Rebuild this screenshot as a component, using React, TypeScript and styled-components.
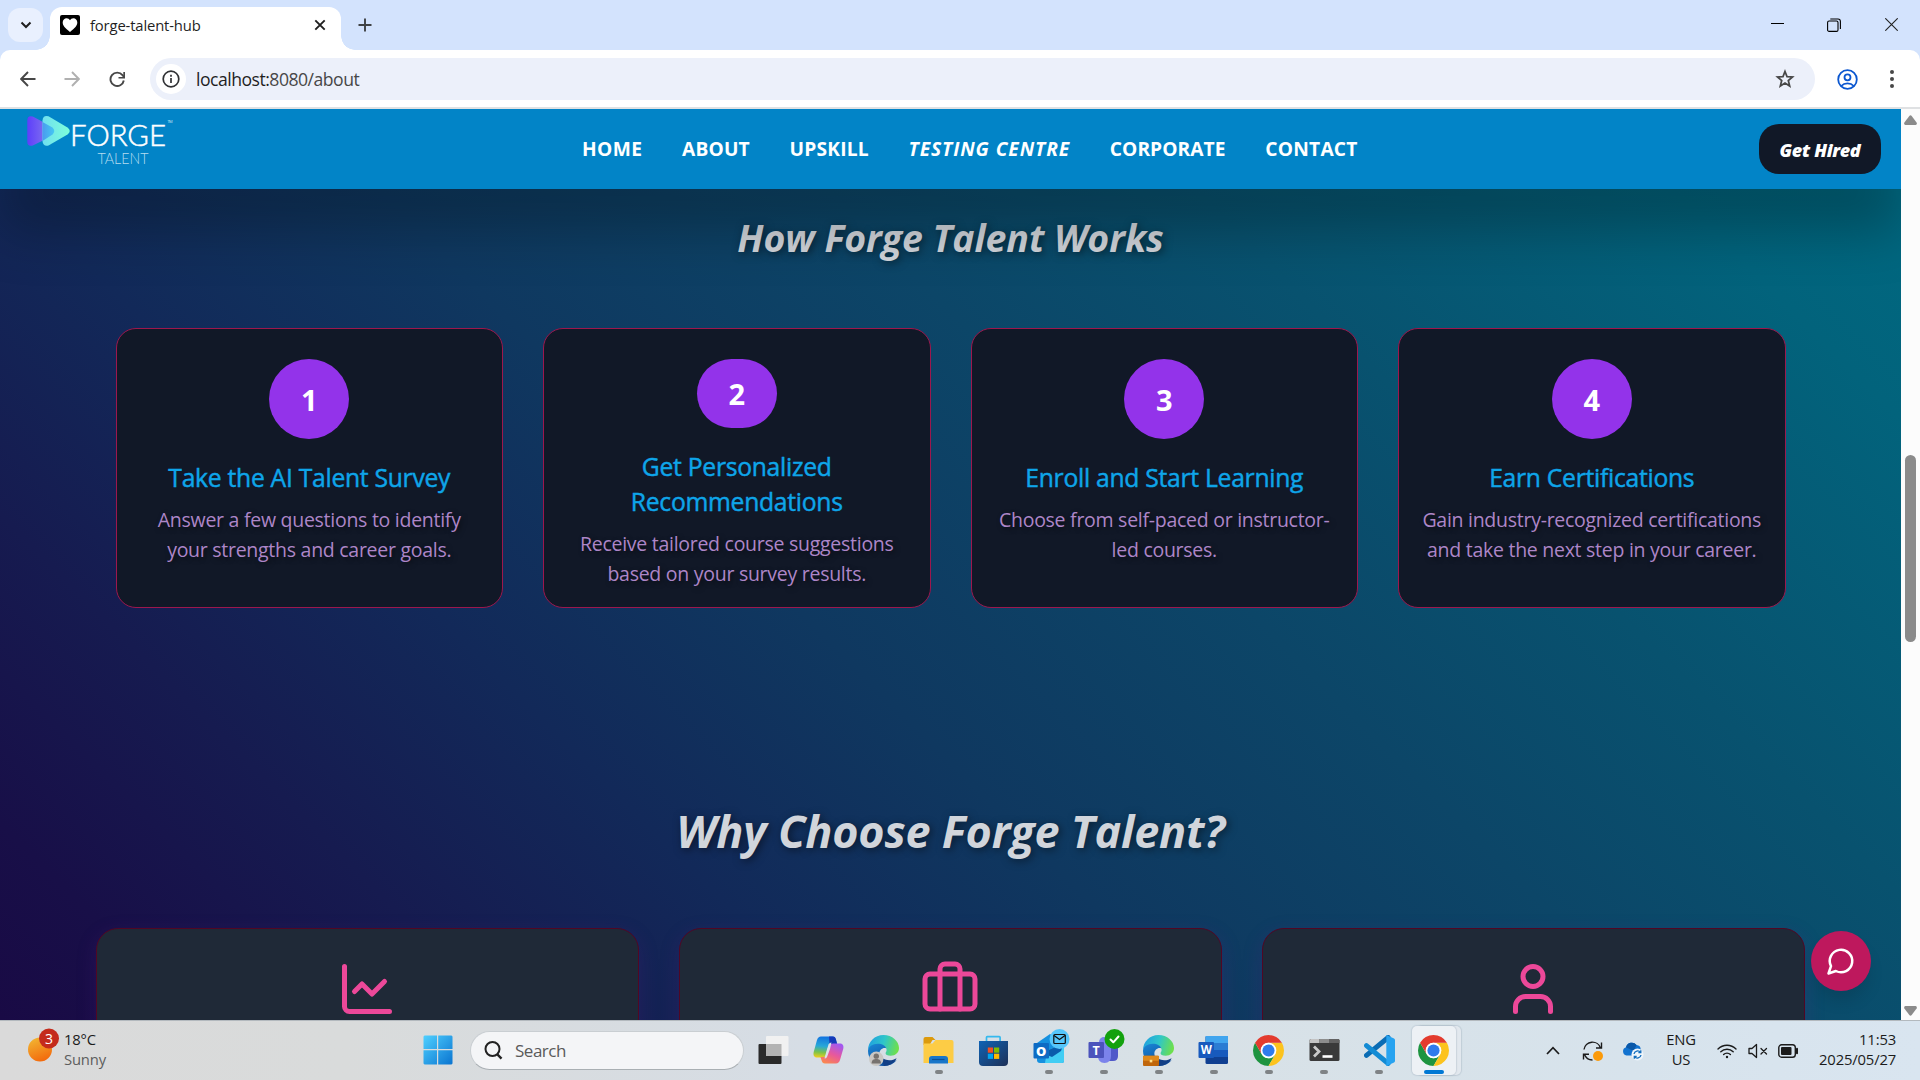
import React from "react";
import styled, { createGlobalStyle, css } from "styled-components";

const GlobalStyle = createGlobalStyle`
  * { box-sizing: border-box; }
  body { margin: 0; overflow: hidden; font-family: "Open Sans", "Noto Sans", sans-serif; }
  h2, h3, p { margin: 0; }
  svg { display: block; flex: none; }
`;

const Screen = styled.div`
  width: 1920px;
  height: 1080px;
  display: flex;
  flex-direction: column;
  background: #d3e3fd;
`;

/* ---------- Browser chrome ---------- */

const TabStrip = styled.div`
  height: 50px;
  flex: none;
  display: flex;
  align-items: flex-start;
  padding-left: 8px;
`;

const TabSearch = styled.div`
  width: 35px;
  height: 34px;
  margin-top: 8px;
  border-radius: 12px;
  background: #e9f0fe;
  display: grid;
  place-items: center;
`;

const Tab = styled.div`
  position: relative;
  width: 291px;
  height: 43px;
  margin: 7px 0 0 7px;
  padding: 0 13px 7px 10px;
  border-radius: 12px 12px 0 0;
  background: #fff;
  display: flex;
  align-items: center;
  &::before, &::after {
    content: "";
    position: absolute;
    bottom: 0;
    width: 14px;
    height: 14px;
  }
  &::before { left: -14px; background: radial-gradient(circle at 0 0, transparent 13.5px, #fff 14px); }
  &::after { right: -14px; background: radial-gradient(circle at 100% 0, transparent 13.5px, #fff 14px); }
`;

const TabTitle = styled.span`
  flex: 1;
  margin-left: 10px;
  font-size: 14.8px;
  line-height: 20px;
  letter-spacing: -0.14px;
  color: #1f1f1f;
`;

const NewTab = styled.div`
  width: 34px;
  height: 50px;
  margin-left: 7px;
  display: grid;
  place-items: center;
`;

const WindowButtons = styled.div`
  margin-left: auto;
  height: 49px;
  display: flex;
  & > div { width: 57px; display: grid; place-items: center; }
  & > div:nth-child(2) { padding-right: 2px; }
`;

const Toolbar = styled.div`
  height: 59px;
  flex: none;
  display: flex;
  align-items: flex-start;
  padding-top: 8px;
  border-radius: 10px 10px 0 0;
  border-bottom: 2px solid #dfe1e3;
  background: #fff;
`;

const ToolButton = styled.div<{ $w: number }>`
  width: ${(p) => p.$w}px;
  height: 42px;
  display: grid;
  place-items: center;
`;

const AddressBar = styled.div`
  width: 1665px;
  height: 42px;
  margin-left: 4px;
  padding: 0 19px 0 6px;
  border-radius: 21px;
  background: #ecf0fa;
  display: flex;
  align-items: center;
`;

const SiteInfo = styled.div`
  width: 30px;
  height: 30px;
  border-radius: 50%;
  background: #fff;
  display: grid;
  place-items: center;
`;

const Address = styled.span`
  flex: 1;
  margin-left: 10px;
  font-size: 17.6px;
  letter-spacing: -0.5px;
  color: #474747;
  b { font-weight: 400; color: #1f1f1f; }
`;

/* ---------- Page ---------- */

const Viewport = styled.div`
  height: 911px;
  flex: none;
  display: flex;
`;

const Page = styled.div`
  position: relative;
  width: 1901px;
  height: 911px;
  overflow: hidden;
  display: flex;
  flex-direction: column;
  background: linear-gradient(45deg, #190a45 0%, #180f48 7%, #161b50 18%, #122959 30%,
    #0f3860 43%, #0c4668 59%, #08526f 72%, #02637c 89%, #006a82 100%);
`;

const Nav = styled.nav`
  position: relative;
  z-index: 1;
  height: 80px;
  flex: none;
  display: flex;
  align-items: center;
  padding: 0 20px 0 24px;
  background: #0284c7;
  box-shadow: 0 43px 52px 0 rgba(0, 0, 0, 0.25);
`;

const NavLinks = styled.div`
  margin: 0 0 2px 402px;
  display: flex;
  gap: 39.7px;
`;

const NavLink = styled.span<{ $ls: number; $italic?: boolean }>`
  font-size: 19.2px;
  font-weight: 700;
  font-style: ${(p) => (p.$italic ? "italic" : "normal")};
  letter-spacing: ${(p) => p.$ls}px;
  white-space: nowrap;
  color: #fff;
`;

const HireButton = styled.div`
  width: 122px;
  height: 50px;
  margin-left: auto;
  border-radius: 20px;
  background: #111827;
  color: #fff;
  font-size: 18px;
  font-weight: 800;
  font-style: italic;
  letter-spacing: -0.32px;
  line-height: 52px;
  text-align: center;
`;

const Heading = styled.h2<{ $size: number; $top: number; $ls: number }>`
  margin-top: ${(p) => p.$top}px;
  font-size: ${(p) => p.$size}px;
  line-height: 50px;
  font-weight: 700;
  font-style: italic;
  letter-spacing: ${(p) => p.$ls}px;
  text-align: center;
  color: #d1d5db;
  text-shadow: 2px 2px 8px rgba(0, 0, 0, 0.5);
`;

const Steps = styled.section`
  display: grid;
  grid-template-columns: repeat(4, 1fr);
  gap: 40px;
  margin: 65px 115.5px 0;
`;

const StepCard = styled.article`
  height: 280px;
  padding: 30px 20px 18px;
  border: 1px solid #9d174d;
  border-radius: 20px;
  background: #111827;
  display: flex;
  flex-direction: column;
  align-items: center;
  text-align: center;
`;

const StepNumber = styled.div`
  width: 80px;
  height: 80px;
  flex: 0 1 80px;
  min-height: 0;
  border-radius: 40px;
  background: #9333ea;
  color: #fff;
  font-size: 29px;
  font-weight: 700;
  display: flex;
  align-items: center;
  justify-content: center;
`;

const StepTitle = styled.h3`
  flex: none;
  margin-top: 21px;
  font-size: 24.7px;
  line-height: 35px;
  font-weight: 500;
  letter-spacing: -0.28px;
  color: #0ea5e9;
  -webkit-text-stroke: 0.45px #0ea5e9;
`;

const StepText = styled.p`
  flex: none;
  margin-top: 10px;
  font-size: 19.5px;
  line-height: 30px;
  letter-spacing: -0.27px;
  color: #ad86c8;
  text-shadow: 2px 2px 5px rgba(0, 0, 0, 0.5);
`;

const Reasons = styled.section`
  display: grid;
  grid-template-columns: repeat(3, 1fr);
  gap: 40px;
  margin: 72px 96px 0;
`;

const ReasonCard = styled.article`
  height: 300px;
  padding: 30px 1px 0 0;
  border: 1px solid #500724;
  border-radius: 22px;
  background: #1f2937;
  box-shadow: 0 6px 20px rgba(88, 28, 135, 0.24);
  display: flex;
  justify-content: center;
`;

const ChatButton = styled.div`
  position: absolute;
  right: 30px;
  bottom: 29px;
  width: 60px;
  height: 60px;
  border-radius: 50%;
  background: #be185d;
  box-shadow: 0 12px 18px -4px rgba(0, 0, 0, 0.14);
  display: grid;
  place-items: center;
`;

const Scrollbar = styled.div`
  width: 19px;
  display: flex;
  flex-direction: column;
  align-items: center;
  padding: 6px 0 4px;
  background: #fcfcfc;
`;

const Thumb = styled.div`
  width: 11px;
  height: 187px;
  margin-top: 330px;
  margin-bottom: auto;
  border-radius: 6px;
  background: #8b8b8b;
`;

/* ---------- Taskbar ---------- */

const Taskbar = styled.div`
  height: 60px;
  flex: none;
  display: flex;
  align-items: center;
  padding-right: 24px;
  border-top: 1px solid #b3b9be;
  background: linear-gradient(90deg, #dadada 0%, #d9dbdb 18%, #d6dde5 42%, #d8e1e6 60%, #d7e3ec 85%, #d9e5f0 100%);
  color: #1b1b1b;
`;

const Weather = styled.div`
  width: 410px;
  padding-left: 28px;
  display: flex;
  align-items: center;
  gap: 4px;
  & > svg { margin-bottom: 9px; }
`;

const TwoLines = styled.div<{ $align?: string; $width?: number }>`
  ${(p) => p.$width && css`width: ${p.$width}px;`}
  margin-bottom: 4px;
  text-align: ${(p) => p.$align || "left"};
  font-size: 14.8px;
  line-height: 20px;
  letter-spacing: -0.16px;
  span { display: block; }
`;

const Muted = styled.span`
  color: #5d5d5d;
`;

const TaskCell = styled.div<{ $active?: boolean }>`
  width: 55.05px;
  height: 59px;
  padding-top: 14px;
  display: flex;
  flex-direction: column;
  align-items: center;
  gap: 4px;
  ${(p) =>
    p.$active &&
    css`
      width: 44px;
      height: 49px;
      padding-top: 9px;
      margin-left: 5px;
      border-radius: 5px;
      background: #edf1f5;
      box-shadow: 0 0 1px 1px rgba(160, 175, 190, 0.35), 5px 0 0 #e2e8ee, 5px 0 1px 1px rgba(160, 175, 190, 0.4);
    `}
`;

const Indicator = styled.i<{ $active?: boolean }>`
  width: ${(p) => (p.$active ? 20 : 8)}px;
  height: 4px;
  border-radius: 2px;
  background: ${(p) => (p.$active ? "#0078d4" : "#7f8386")};
`;

const SearchBox = styled.div`
  width: 274px;
  height: 39px;
  margin: 0 2px 0 5px;
  padding-left: 13px;
  border-radius: 20px;
  border: 1px solid #c9ced2;
  border-bottom-color: #a9afb3;
  background: #f4f5f7;
  display: flex;
  align-items: center;
  gap: 12px;
  font-size: 17px;
  letter-spacing: -0.5px;
  color: #5a5a5a;
`;

const Tray = styled.div`
  margin-left: auto;
  display: flex;
  align-items: center;
`;

const TrayCell = styled.div<{ $w: number }>`
  width: ${(p) => p.$w}px;
  display: grid;
  place-items: center;
`;

/* ---------- Drawings ---------- */

const Logo = () => (
  <svg width="156" height="80" viewBox="24 109 156 80">
    <defs>
      <linearGradient id="lgA" x1="0" x2="1">
        <stop offset="0" stopColor="#5d3ffb" />
        <stop offset="1" stopColor="#7a68f0" />
      </linearGradient>
      <linearGradient id="lgB" x1="0" x2="1">
        <stop offset="0" stopColor="#6fdff0" />
        <stop offset="1" stopColor="#7dffd9" />
      </linearGradient>
      <linearGradient id="lgC" x1="0" x2="1">
        <stop offset="0" stopColor="#4a9bef" />
        <stop offset="1" stopColor="#45c8f2" />
      </linearGradient>
    </defs>
    <path d="M27.300 120.500q0-5.500 5.500-4L43 122v18.500L32.800 145.500q-5.500 1.500-5.500-4z" fill="url(#lgA)" />
    <path d="M42.500 120.500q.5-5.500 6-4.200L67.500 127.500q4.500 3.500 0 7L48.500 145.500q-5.500 1.300-6-4.500z" fill="url(#lgB)" />
    <path d="M42.500 122 52.500 127.500q3.500 3.500 0 7L42.500 141z" fill="url(#lgC)" />
    <text x="70" y="145.600" fontFamily="Lato" fontWeight="300" fontSize="30" fill="#fff" stroke="#fff" strokeWidth="0.500" textLength="96" lengthAdjust="spacingAndGlyphs">FORGE</text>
    <text x="97.500" y="163.800" fontFamily="Lato" fontWeight="300" fontSize="15.500" fill="#b5dcf0" textLength="51" lengthAdjust="spacingAndGlyphs">TALENT</text>
    <text x="167.500" y="123.300" fontFamily="Open Sans" fontSize="4" fill="#cfe8f5" textLength="5">TM</text>
  </svg>
);

const line = { fill: "none", strokeLinecap: "round" as const, strokeLinejoin: "round" as const };

const Edge = ({ kind }: { kind: "profile" | "work" }) => (
  <svg width="31" height="31" viewBox="0 0 30 30">
    <defs>
      <linearGradient id={"e1" + kind} x1="0" y1="0.300" x2="1" y2="0.500">
        <stop offset="0" stopColor="#1f9fe0" />
        <stop offset="0.500" stopColor="#2fc6c9" />
        <stop offset="1" stopColor="#6fe04a" />
      </linearGradient>
      <linearGradient id={"e2" + kind} x1="0" y1="0" x2="0.500" y2="1">
        <stop offset="0" stopColor="#1a87d6" />
        <stop offset="1" stopColor="#0c4fa0" />
      </linearGradient>
    </defs>
    <path d="M0 15C0 6.500 6.500 0 15 0s15 6 15 12.500c0 4.500-3.500 7.500-8 7.500-3.500 0-5-1-5-2.300 0-1 1-1.500 1-3.200 0-2.500-2.500-4.500-5.500-4.500C6 10 0 12 0 15z" fill={`url(#e1${kind})`} />
    <path d="M0 15.500C0 11.500 4.500 8.500 9.500 8.500c4 0 7.500 2 8.300 4.500C15 11.500 11 14 11 18c0 5 4.500 8.500 9.500 8.500 3 0 5.500-1 7.300-2.500C25 28 20.500 30 15 30 6.500 30 0 23.500 0 15.500z" fill={`url(#e2${kind})`} />
    <path d="M11.500 18.500c1 4 5 6 9 6 3 0 5-1 7.200-2-2.200 4.500-7 7.500-12.200 7.500z" fill="#123f86" />
    {kind === "profile" ? (
      <>
        <circle cx="8" cy="23" r="7" fill="#c9c7c3" />
        <circle cx="8" cy="20.500" r="2.600" fill="#77736f" />
        <path d="M3.500 27.500c0-3.500 2-4.300 4.500-4.300s4.500.8 4.500 4.300" fill="#77736f" />
      </>
    ) : (
      <>
        <rect x="0" y="20" width="15.500" height="10" rx="1" fill="#c0670c" />
        <rect x="0" y="20" width="15.500" height="5" rx="1" fill="#de8a1c" />
        <rect x="6.500" y="24" width="2.500" height="2.500" fill="#ffe08a" />
      </>
    )}
  </svg>
);

const Chrome = () => (
  <svg width="31" height="31" viewBox="0 0 48 48">
    <path d="M3.220 12A24 24 0 0 0 24 48L34.390 30A12 12 0 0 1 13.610 30Z" fill="#1e9440" />
    <path d="M34.390 30 24 48A24 24 0 0 0 44.780 12H24A12 12 0 0 1 34.390 30Z" fill="#fcc31e" />
    <path d="M24 12H44.780A24 24 0 0 0 3.220 12L13.610 30A12 12 0 0 1 24 12Z" fill="#e33b2e" />
    <circle cx="24" cy="24" r="12" fill="#fff" />
    <circle cx="24" cy="24" r="9.400" fill="#2f7bec" />
  </svg>
);

const Start = () => (
  <svg width="30" height="30" viewBox="0 0 30 30">
    <defs>
      <linearGradient id="win" x1="0" y1="0" x2="1" y2="1" gradientUnits="objectBoundingBox">
        <stop offset="0" stopColor="#4fd0ff" />
        <stop offset="1" stopColor="#0a74d0" />
      </linearGradient>
    </defs>
    <path d="M1.500.5H14V14H.5V1.500zM15.200.5H28.500l1 1V14H15.200zM.5 15.200H14V29.500H1.500l-1-1zM15.200 15.200H29.500V28.500l-1 1H15.200z" fill="url(#win)" />
  </svg>
);

const TaskView = () => (
  <svg width="31" height="30" viewBox="0 0 31 30">
    <rect x="0.500" y="9" width="23" height="20" rx="1" fill="#2a2a2a" />
    <rect x="8" y="1" width="22.500" height="20" rx="1" fill="#f1f1f1" />
    <rect x="8" y="9" width="15.500" height="12" fill="#b3b3b3" />
  </svg>
);

const Copilot = () => (
  <svg width="31" height="30" viewBox="0 0 31 30">
    <defs>
      <linearGradient id="cp1" x1="0.300" y1="0" x2="0.200" y2="1">
        <stop offset="0" stopColor="#1173e0" />
        <stop offset="0.450" stopColor="#27a8d8" />
        <stop offset="0.750" stopColor="#7cc34a" />
        <stop offset="1" stopColor="#f2cf1b" />
      </linearGradient>
      <linearGradient id="cp2" x1="0.700" y1="0" x2="0.200" y2="1">
        <stop offset="0" stopColor="#a259f0" />
        <stop offset="0.500" stopColor="#e8589c" />
        <stop offset="1" stopColor="#fb8a4c" />
      </linearGradient>
    </defs>
    <path d="M8 1.500h11.500c2 0 2.700 1 3.300 3l1.200 4.500h-5c-2.500 0-3.500 1.500-4.200 4L13 19.500c-.6 2-1.600 3-3.500 3H4C1 22.500 0 20 .7 17L4 5c.7-2.300 2-3.500 4-3.500z" fill="url(#cp1)" />
    <path d="M16 1.500h4c1.800 0 2.500 1 3 3L24.200 9H19l-2.500 0z" fill="#1539b8" />
    <path d="M23 28.500H12c-2 0-2.800-1-3.400-3L7.500 22h3c2.500 0 3.500-1.500 4.200-4l1.800-6c.6-2 1.600-3.500 3.500-3.500h7c3 0 4 2.500 3.200 5.500L27 25c-.7 2.300-2 3.500-4 3.500z" fill="url(#cp2)" />
    <path d="M13.500 16 15.500 9.500q1-2 3-2L17 14l-3 8q-.8 1.500-2.500 1.500z" fill="#dbe2ea" />
  </svg>
);

const Explorer = () => (
  <svg width="31" height="30" viewBox="0 0 31 30">
    <path d="M.5 4q0-2 2-2h7l3 3h-3l-3 5h-6z" fill="#dc9a0d" />
    <path d="M.5 8.500h9l3-3.500h16q2 0 2 2v21h-30z" fill="#fdcc45" />
    <path d="M6 28.500v-4.500q0-3 3-3h13q3 0 3 3v4.500z" fill="#1976c9" />
    <path d="M9 24.500h12.500" stroke="#0d4f94" strokeWidth="1.200" />
  </svg>
);

const Store = () => (
  <svg width="31" height="31" viewBox="0 0 31 31">
    <defs>
      <linearGradient id="ms" x1="0" y1="0" x2="1" y2="1">
        <stop offset="0" stopColor="#0f63b5" />
        <stop offset="1" stopColor="#1d3057" />
      </linearGradient>
    </defs>
    <path d="M8.500 7V2.500q0-.8.800-.8h12q.8 0 .8.800V7" fill="none" stroke="#35b9ee" strokeWidth="1.700" />
    <path d="M1 6h29v21q0 4-4 4H5q-4 0-4-4z" fill="url(#ms)" />
    <path d="M9.800 12.500h5.200v5.200H9.800z" fill="#f25022" />
    <path d="M16 12.500h5.200v5.200H16z" fill="#7fba00" />
    <path d="M9.800 18.700h5.200v5.200H9.800z" fill="#00a4ef" />
    <path d="M16 18.700h5.200v5.200H16z" fill="#ffb900" />
  </svg>
);

const Outlook = () => (
  <svg width="37" height="36" viewBox="0 0 37 36">
    <path d="M4 14 17 5l14 9v18q0 2-2 2H7q-3 0-3-3z" fill="#1590df" />
    <path d="m14 22 17-9v19q0 2-2 2H12z" fill="#41cdf4" />
    <path d="M9 24 31 14l-3 8-9 6z" fill="#0a5cab" />
    <rect x="0.500" y="14" width="15.500" height="15.500" rx="1" fill="#0d6bc4" />
    <text x="8.200" y="26.500" textAnchor="middle" fontFamily="Open Sans" fontWeight="800" fontSize="13" fill="#fff">O</text>
    <circle cx="26.500" cy="10" r="10" fill="#56c6fb" />
    <rect x="20.800" y="5.500" width="11.500" height="9" rx="1" fill="none" stroke="#111" strokeWidth="1.200" />
    <path d="m21 6.500 5.500 4 5.500-4" fill="none" stroke="#111" strokeWidth="1.200" />
  </svg>
);

const Teams = () => (
  <svg width="37" height="36" viewBox="0 0 37 36">
    <circle cx="16" cy="13" r="5" fill="#7b83eb" />
    <path d="M20 17h10v10q0 5-5 5h-5z" fill="#5059c9" />
    <path d="M10 17h13v10q0 7-6.500 7T10 27z" fill="#7b83eb" />
    <rect x="0.500" y="13" width="15.500" height="16" rx="1" fill="#4b53bc" />
    <text x="8.200" y="25.800" textAnchor="middle" fontFamily="Open Sans" fontWeight="700" fontSize="12.500" fill="#fff">T</text>
    <circle cx="26.500" cy="10" r="10" fill="#13a10e" />
    <path d="m22.500 10.500 2.800 2.800 5.200-5.800" {...line} stroke="#fff" strokeWidth="2" />
  </svg>
);

const Word = () => (
  <svg width="31" height="30" viewBox="0 0 31 30">
    <rect x="7.500" y="1" width="22.500" height="28" rx="1.500" fill="#103f91" />
    <path d="M7.500 1h22.500v7h-22.500z" fill="#41a5ee" />
    <path d="M7.500 8h22.500v7h-22.500z" fill="#2b7cd3" />
    <path d="M7.500 15h22.500v7h-22.500z" fill="#185abd" />
    <rect x="0.500" y="7" width="15.500" height="16" rx="1" fill="#185abd" />
    <text x="8.200" y="19.300" textAnchor="middle" fontFamily="Open Sans" fontWeight="700" fontSize="11.500" fill="#fff">W</text>
  </svg>
);

const Terminal = () => (
  <svg width="31" height="30" viewBox="0 0 31 30">
    <rect x="0.500" y="4" width="30" height="22" rx="1.500" fill="#3a3a3a" />
    <path d="M2 4h8.500v4H.5V5.500Q.5 4 2 4z" fill="#c4c4c4" />
    <path d="M10.500 4h10v4h-10z" fill="#8d8d8d" />
    <path d="M20.500 4H29q1.500 0 1.500 1.500V8h-10z" fill="#626262" />
    <path d="m5 11.500 5 5-5 5" fill="none" stroke="#c9c9c9" strokeWidth="2.800" />
    <path d="M13.500 21.500h10" stroke="#fff" strokeWidth="2.600" />
  </svg>
);

const VsCode = () => (
  <svg width="31" height="31" viewBox="0 0 100 100">
    <path d="M8 66 78 8" stroke="#0a6cb4" strokeWidth="16" strokeLinecap="round" />
    <path d="M8 34 78 92" stroke="#138bd4" strokeWidth="16" strokeLinecap="round" />
    <path d="M72 0 97 11q3 2 3 5v68q0 3-3 5L72 100z" fill="#27a3f0" />
  </svg>
);

const apps = [
  { icon: <TaskView /> },
  { icon: <Copilot /> },
  { icon: <Edge kind="profile" /> },
  { icon: <Explorer />, open: true },
  { icon: <Store /> },
  { icon: <Outlook />, open: true, badge: true },
  { icon: <Teams />, open: true, badge: true },
  { icon: <Edge kind="work" />, open: true },
  { icon: <Word />, open: true },
  { icon: <Chrome />, open: true },
  { icon: <Terminal />, open: true },
  { icon: <VsCode />, open: true },
];

const IconSlot = styled.div<{ $badge?: boolean }>`
  width: 31px;
  height: 31px;
  flex: none;
  display: flex;
  ${(p) => p.$badge && css`& > svg { margin-top: -6px; }`}
`;

const steps = [
  ["Take the AI Talent Survey", "Answer a few questions to identify your strengths and career goals."],
  ["Get Personalized Recommendations", "Receive tailored course suggestions based on your survey results."],
  ["Enroll and Start Learning", "Choose from self-paced or instructor-led courses."],
  ["Earn Certifications", "Gain industry-recognized certifications and take the next step in your career."],
];

const links = [
  { label: "HOME", ls: 0.4 },
  { label: "ABOUT", ls: 0.15 },
  { label: "UPSKILL", ls: 0.2 },
  { label: "TESTING CENTRE", ls: 0.92, italic: true },
  { label: "CORPORATE", ls: 0.06 },
  { label: "CONTACT", ls: 0.23 },
];

const reasonIcons = [
  <><path d="M3 3v16a2 2 0 0 0 2 2h16" /><path d="m19 9-5 5-4-4-3 3" /></>,
  <><path d="M16 20V4a2 2 0 0 0-2-2h-4a2 2 0 0 0-2 2v16" /><rect width="20" height="14" x="2" y="6" rx="2" /></>,
  <><path d="M19 21v-2a4 4 0 0 0-4-4H9a4 4 0 0 0-4 4v2" /><circle cx="12" cy="7" r="4" /></>,
];

export default function App() {
  return (
    <Screen>
      <GlobalStyle />
      <TabStrip>
        <TabSearch>
          <svg width="12" height="8" viewBox="0 0 12 8"><path d="m1.500 1.500 4.500 4.500 4.500-4.500" fill="none" stroke="#1f1f1f" strokeWidth="2" /></svg>
        </TabSearch>
        <Tab>
          <svg width="20" height="20" viewBox="0 0 20 20">
            <rect width="20" height="20" rx="2" fill="#000" />
            <path d="M10 17C5 13 2.700 10.500 2.700 7.500 2.700 5 4.500 3.300 6.600 3.300c1.500 0 2.700.8 3.400 2 .7-1.200 1.900-2 3.400-2 2.100 0 3.900 1.700 3.900 4.200 0 3-2.300 5.500-7.300 9.500z" fill="#fff" />
          </svg>
          <TabTitle>forge-talent-hub</TabTitle>
          <svg width="16" height="16" viewBox="0 0 16 16"><path d="m3.300 3.300 9.400 9.400m0-9.400-9.400 9.400" stroke="#1f1f1f" strokeWidth="1.900" /></svg>
        </Tab>
        <NewTab>
          <svg width="14" height="14" viewBox="0 0 14 14"><path d="M7 .5v13M.5 7h13" stroke="#3f4245" strokeWidth="1.900" /></svg>
        </NewTab>
        <WindowButtons>
          <div><svg width="13" height="13" viewBox="0 0 13 13"><path d="M0 5.500h13" stroke="#000" /></svg></div>
          <div><svg width="14" height="14" viewBox="0 0 14 14" fill="none" stroke="#000" strokeWidth="1.100"><rect x=".6" y="3" width="10.400" height="10.400" rx="1.500" /><path d="M3.300 1H11q2.400 0 2.400 2.400V11" /></svg></div>
          <div><svg width="13" height="13" viewBox="0 0 13 13"><path d="m.3.3 12.400 12.400m0-12.400L.3 12.700" stroke="#222" strokeWidth="1.100" /></svg></div>
        </WindowButtons>
      </TabStrip>

      <Toolbar>
        <ToolButton $w={55}>
          <svg width="16" height="16" viewBox="0 0 16 16"><path d="M15.500 8H1.500M8 1 1.200 8 8 15" fill="none" stroke="#474747" strokeWidth="1.900" /></svg>
        </ToolButton>
        <ToolButton $w={34}>
          <svg width="16" height="16" viewBox="0 0 16 16"><path d="M.5 8h14M8 1l6.800 7L8 15" fill="none" stroke="#b0b0b0" strokeWidth="1.900" /></svg>
        </ToolButton>
        <ToolButton $w={57}>
          <svg width="17" height="17" viewBox="0 0 17 17"><path d="M14.800 9.500A6.700 6.700 0 1 1 13.500 4.200L15 6" fill="none" stroke="#474747" strokeWidth="1.900" /><path d="M16 1v6.500H9.500V6h4.800V1z" fill="#474747" /></svg>
        </ToolButton>
        <AddressBar>
          <SiteInfo>
            <svg width="18" height="18" viewBox="0 0 18 18"><circle cx="9" cy="9" r="7.800" fill="none" stroke="#303134" strokeWidth="1.700" /><path d="M9 8v5M9 4.800v1.900" stroke="#303134" strokeWidth="1.700" /></svg>
          </SiteInfo>
          <Address><b>localhost:</b>8080/about</Address>
          <svg width="22" height="22" viewBox="0 0 24 24"><path d="m12 3.800 2.200 5.600 6 .4-4.600 3.900 1.500 5.900L12 16.300l-5.100 3.300 1.500-5.900-4.600-3.900 6-.4z" fill="none" stroke="#474747" strokeWidth="1.900" /></svg>
        </AddressBar>
        <ToolButton $w={65}>
          <svg width="21" height="21" viewBox="0 0 21 21" fill="none" stroke="#0b57d0" strokeWidth="1.800"><circle cx="10.500" cy="10.500" r="9.300" /><circle cx="10.500" cy="8.300" r="3" /><path d="M4.200 17q2.500-2.700 6.300-2.700t6.300 2.700" /></svg>
        </ToolButton>
        <ToolButton $w={24}>
          <svg width="4" height="18" viewBox="0 0 4 18" fill="#474747"><circle cx="2" cy="2" r="2" /><circle cx="2" cy="9" r="2" /><circle cx="2" cy="16" r="2" /></svg>
        </ToolButton>
      </Toolbar>

      <Viewport>
        <Page>
          <Nav>
            <Logo />
            <NavLinks>
              {links.map((l) => (
                <NavLink key={l.label} $ls={l.ls} $italic={l.italic}>{l.label}</NavLink>
              ))}
            </NavLinks>
            <HireButton>Get Hired</HireButton>
          </Nav>
          <Heading $size={37.5} $top={24} $ls={-0.08}>How Forge Talent Works</Heading>
          <Steps>
            {steps.map(([title, text], i) => (
              <StepCard key={title}>
                <StepNumber>{i + 1}</StepNumber>
                <StepTitle>{title}</StepTitle>
                <StepText>{text}</StepText>
              </StepCard>
            ))}
          </Steps>
          <Heading $size={45} $top={198} $ls={-0.21}>Why Choose Forge Talent?</Heading>
          <Reasons>
            {reasonIcons.map((icon, i) => (
              <ReasonCard key={i}>
                <svg width="60" height="60" viewBox="0 0 24 24" {...line} stroke="#ec4899" strokeWidth="2">{icon}</svg>
              </ReasonCard>
            ))}
          </Reasons>
          <ChatButton>
            <svg width="30" height="30" viewBox="0 0 24 24" {...line} stroke="#fff" strokeWidth="2"><path d="M7.900 20A9 9 0 1 0 4 16.100L2 22Z" /></svg>
          </ChatButton>
        </Page>
        <Scrollbar>
          <svg width="13" height="10" viewBox="0 0 13 10"><path d="M5.300 1q1.200-1.400 2.400 0L12.600 7.500q.8 2-1 2.500H1.400q-1.800-.5-1-2.500z" fill="#8b8b8b" /></svg>
          <Thumb />
          <svg width="13" height="10" viewBox="0 0 13 10"><path d="M5.300 9q1.200 1.400 2.400 0L12.600 2.500q.8-2-1-2.500H1.400q-1.800.5-1 2.500z" fill="#8b8b8b" /></svg>
        </Scrollbar>
      </Viewport>

      <Taskbar>
        <Weather>
          <svg width="32" height="36" viewBox="0 0 32 36">
            <defs>
              <linearGradient id="sun" x1="0.200" y1="0" x2="0.600" y2="1">
                <stop offset="0" stopColor="#f2b632" />
                <stop offset="1" stopColor="#f3690c" />
              </linearGradient>
            </defs>
            <circle cx="12" cy="21.500" r="12" fill="url(#sun)" />
            <circle cx="21" cy="10.500" r="10" fill="#c42b1c" />
            <text x="21" y="15.500" textAnchor="middle" fontFamily="Open Sans" fontSize="14" fill="#fff">3</text>
          </svg>
          <TwoLines>
            <span>18°C</span>
            <Muted>Sunny</Muted>
          </TwoLines>
        </Weather>
        <TaskCell><Start /></TaskCell>
        <SearchBox>
          <svg width="19" height="19" viewBox="0 0 19 19"><circle cx="8.500" cy="8" r="7" fill="none" stroke="#222" strokeWidth="2" /><path d="m13 13 4.500 4.700" stroke="#222" strokeWidth="2.500" /></svg>
          Search
        </SearchBox>
        {apps.map((a, i) => (
          <TaskCell key={i}>
            <IconSlot $badge={a.badge}>{a.icon}</IconSlot>
            {a.open && <Indicator />}
          </TaskCell>
        ))}
        <TaskCell $active>
          <IconSlot><Chrome /></IconSlot>
          <Indicator $active />
        </TaskCell>
        <Tray>
          <TrayCell $w={40}>
            <svg width="14" height="9" viewBox="0 0 14 9"><path d="m1 8 6-6.300L13 8" fill="none" stroke="#1b1b1b" strokeWidth="1.700" /></svg>
          </TrayCell>
          <TrayCell $w={40}>
            <svg width="22" height="22" viewBox="0 0 22 22">
              <path d="M2 9.500a8.500 8.500 0 0 1 16.500-1.500M19.500 2.500V8H14M1.500 19.500v-5.300H7M2.500 14.500a8.500 8.500 0 0 0 8 5.500" fill="none" stroke="#1b1b1b" strokeWidth="1.400" />
              <circle cx="16" cy="16" r="5" fill="#fb9a0a" />
            </svg>
          </TrayCell>
          <TrayCell $w={40}>
            <svg width="22" height="20" viewBox="0 0 22 20">
              <path d="M4.500 14.500A4.300 4.300 0 0 1 4 6.200 6 6 0 0 1 14.500 4a4.500 4.500 0 0 1 4.200 4.500l-5 6z" fill="#1272cf" />
              <path d="M4 6.200A6 6 0 0 1 14.500 4l-3 6z" fill="#0a58a8" />
              <circle cx="15.500" cy="13.500" r="6" fill="#eef5fb" />
              <path d="M12 13a3.600 3.600 0 0 1 6.500-1.500m.5 2.500a3.600 3.600 0 0 1-6.500 1.500M18.800 9.300v2.400h-2.400M12.300 17.700v-2.400h2.400" fill="none" stroke="#0f6cbd" strokeWidth="1.300" />
            </svg>
          </TrayCell>
          <TwoLines $align="center" $width={56}>
            <span>ENG</span>
            <span>US</span>
          </TwoLines>
          <TrayCell $w={36}>
            <svg width="20" height="16" viewBox="0 0 20 16" {...line} stroke="#1b1b1b" strokeWidth="1.400">
              <path d="M1 6a12.700 12.700 0 0 1 18 0M3.800 8.800a8.800 8.800 0 0 1 12.400 0M6.600 11.500a4.800 4.800 0 0 1 6.800 0" />
              <circle cx="10" cy="14" r="1.200" fill="#1b1b1b" stroke="none" />
            </svg>
          </TrayCell>
          <TrayCell $w={25}>
            <svg width="20" height="16" viewBox="0 0 20 16" {...line} stroke="#1b1b1b" strokeWidth="1.300">
              <path d="M1 5.500h3L8.500 1.500v13L4 10.500H1zM13 5.500l5.500 5.500m0-5.500L13 11" />
            </svg>
          </TrayCell>
          <TrayCell $w={36}>
            <svg width="21" height="14" viewBox="0 0 21 14">
              <rect x=".8" y=".8" width="16.500" height="12.400" rx="2.800" fill="none" stroke="#1b1b1b" strokeWidth="1.400" />
              <rect x="3" y="3" width="10.500" height="8" rx="1" fill="#1b1b1b" />
              <path d="M19 4.800v4.400" stroke="#1b1b1b" strokeWidth="2" strokeLinecap="round" />
            </svg>
          </TrayCell>
          <TwoLines $align="right" $width={90}>
            <span>11:53</span>
            <span>2025/05/27</span>
          </TwoLines>
        </Tray>
      </Taskbar>
    </Screen>
  );
}
